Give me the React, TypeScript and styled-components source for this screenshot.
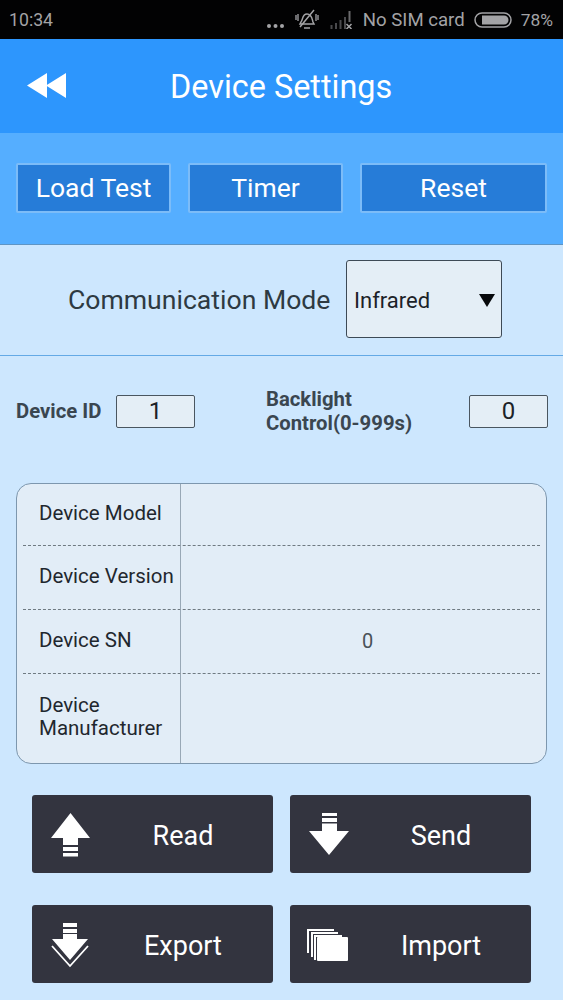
import React from "react";
import styled, { createGlobalStyle } from "styled-components";

const Global = createGlobalStyle`
  html, body { margin: 0; padding: 0; background: #cde7fe; }
  * { box-sizing: border-box; }
  body { font-family: Roboto, "Liberation Sans", sans-serif; }
`;

const Page = styled.div`
  width: 563px;
  height: 1000px;
  overflow: hidden;
  display: flex;
  flex-direction: column;
  background: #cde7fe;
  & > * { flex: none; }
`;

const StatusBar = styled.div`
  height: 39px;
  background: #020203;
  color: #a3a3a6;
  display: flex;
  align-items: center;
  padding: 0 10px 0 9px;
`;
const Clock = styled.span`
  flex: 1;
  font-size: 17.7px;
`;
const StatusIcon = styled.svg<{ $ml?: number; $mt?: number }>`
  display: block;
  flex: none;
  margin-left: ${(p) => p.$ml ?? 0}px;
  margin-top: ${(p) => p.$mt ?? 0}px;
`;
const SimText = styled.span`
  font-size: 18.6px;
  margin: 0 9px 0 10px;
`;
const Percent = styled.span`
  font-size: 17.4px;
  margin-left: 9px;
`;

const Header = styled.header`
  height: 94px;
  background: #2d96fd;
  display: flex;
  align-items: center;
  padding-left: 27px;
`;
const Title = styled.h1`
  margin: 2px 0 0 103px;
  color: #fff;
  font-size: 32.4px;
  font-weight: 400;
`;

const Toolbar = styled.div`
  height: 112px;
  background: #55aeff;
  border-bottom: 1px solid #5f95c4;
  display: flex;
  align-items: flex-start;
  padding: 30px 16px 0;
  gap: 17px;
`;
const TabButton = styled.div<{ $w: number }>`
  width: ${(p) => p.$w}px;
  height: 50px;
  padding-bottom: 1px;
  background: #267cd8;
  border: 2.5px solid #7cbcf8;
  border-radius: 2px;
  color: #fff;
  font-size: 26.5px;
  display: flex;
  align-items: center;
  justify-content: center;
`;

const ModeRow = styled.div`
  height: 111px;
  border-bottom: 1px solid #64aae6;
  display: flex;
  align-items: flex-start;
  padding: 15px 0 0 68px;
`;
const ModeLabel = styled.span`
  font-size: 26.6px;
  color: #2e3a42;
  margin-top: 25px;
  line-height: 30px;
  width: 278px;
`;
const Select = styled.div`
  width: 156px;
  height: 78px;
  background: #e4eef6;
  border: 1px solid #3d4a56;
  border-radius: 3px;
  display: flex;
  align-items: center;
  justify-content: space-between;
  padding: 2px 5px 0 7px;
  font-size: 22px;
  color: #1c2228;
`;

const IdRow = styled.div`
  display: flex;
  align-items: center;
  height: 60px;
  margin-top: 25px;
  padding: 0 15px 0 16px;
`;
const IdLabel = styled.span`
  font-size: 20.3px;
  font-weight: 700;
  color: #3a4650;
  line-height: 24px;
  width: 100px;
`;
const BacklightLabel = styled(IdLabel)`
  width: 203px;
  margin-left: 71px;
`;
const ValueBox = styled.div`
  width: 79px;
  height: 33px;
  background: #e4eef6;
  border: 1px solid #4a5660;
  border-radius: 2px;
  display: flex;
  align-items: center;
  justify-content: center;
  font-size: 24px;
  color: #1c2228;
`;

const InfoTable = styled.div`
  margin: 42px 16px 0;
  height: 281px;
  border: 1.5px solid #7d97ae;
  border-radius: 15px;
  background: #e2edf7;
  display: grid;
  grid-template-rows: 62px 64px 64px 1fr;
  padding: 0 6px;
  overflow: hidden;
`;
const InfoRow = styled.div<{ $last?: boolean }>`
  display: grid;
  grid-template-columns: 158px 1fr;
  border-bottom: ${(p) => (p.$last ? "none" : "1px dashed #6f7a82")};
`;
const InfoLabel = styled.div`
  display: flex;
  align-items: center;
  padding: 0 0 3px 16px;
  font-size: 20.5px;
  line-height: 23px;
  color: #1f272e;
  border-right: 1px solid #98a8b6;
`;
const InfoValue = styled.div`
  display: flex;
  align-items: center;
  justify-content: center;
  padding: 0 0 2px 14px;
  font-size: 20px;
  color: #4a5258;
`;

const ActionGrid = styled.div`
  display: grid;
  grid-template-columns: 241px 241px;
  grid-auto-rows: 78px;
  column-gap: 17px;
  row-gap: 32px;
  margin: 31px 0 0 32px;
`;
const ActionButton = styled.div`
  background: #33343f;
  border-radius: 3px;
  display: flex;
  align-items: center;
  color: #fff;
  font-size: 27px;
  position: relative;
`;
const ActionIcon = styled.svg`
  position: absolute;
  left: 16px;
  top: 14px;
  width: 44px;
  height: 50px;
`;
const ActionText = styled.span`
  width: 100%;
  padding: 3px 0 0 61px;
  text-align: center;
`;

const Back = () => (
  <svg width="40" height="28" viewBox="0 0 40 28">
    <path d="M0 13.5 20 1v25zM19 13.5 39 1v25z" fill="#fff" />
  </svg>
);

const Arrow = () => (
  <svg width="18" height="16" viewBox="0 0 18 16">
    <path d="M1 2 H17 L9 15z" fill="#07090c" />
  </svg>
);

export default function App() {
  return (
    <Page>
      <Global />
      <StatusBar>
        <Clock>10:34</Clock>
        <StatusIcon width="20" height="8" viewBox="0 0 20 8" $mt={12}>
          <circle cx="3" cy="4" r="2" fill="#a3a3a6" />
          <circle cx="9.5" cy="4" r="2" fill="#a3a3a6" />
          <circle cx="16" cy="4" r="2" fill="#a3a3a6" />
        </StatusIcon>
        <StatusIcon width="24" height="22" viewBox="0 0 24 22" $ml={9}>
          <path d="M6 13c2-2 1-8 6-8s5 5 6 8l1 2H5z" fill="none" stroke="#a3a3a6" strokeWidth="1.5" />
          <path d="M9 19h6M5 18 19 1" stroke="#a3a3a6" strokeWidth="1.5" />
          <path d="M1 6v5M3 5v7M21 5v7M23 6v5" stroke="#a3a3a6" strokeWidth="1.3" />
        </StatusIcon>
        <StatusIcon width="23" height="18" viewBox="0 0 23 18" $ml={11}>
          <path d="M1.500 14v4M6 12v6M10.500 9v9M15 6v12" stroke="#4a4a4d" strokeWidth="2" />
          <path d="M19.500 0v11" stroke="#6a6a6d" strokeWidth="2" />
          <path d="M16.500 13l5 5M21.500 13l-5 5" stroke="#a3a3a6" strokeWidth="1.5" />
        </StatusIcon>
        <SimText>No SIM card</SimText>
        <StatusIcon width="38" height="16" viewBox="0 0 38 16">
          <rect x="1" y="1" width="36" height="14" rx="7" fill="none" stroke="#a3a3a6" strokeWidth="1.5" />
          <path d="M8 3.500h22a4.500 4.500 0 0 1 0 9H8z" fill="#a3a3a6" />
        </StatusIcon>
        <Percent>78%</Percent>
      </StatusBar>
      <Header>
        <Back />
        <Title>Device Settings</Title>
      </Header>
      <Toolbar>
        <TabButton $w={155}>Load Test</TabButton>
        <TabButton $w={155}>Timer</TabButton>
        <TabButton $w={187}>Reset</TabButton>
      </Toolbar>
      <ModeRow>
        <ModeLabel>Communication Mode</ModeLabel>
        <Select>
          Infrared
          <Arrow />
        </Select>
      </ModeRow>
      <IdRow>
        <IdLabel>Device ID</IdLabel>
        <ValueBox>1</ValueBox>
        <BacklightLabel>
          Backlight
          <br />
          Control(0-999s)
        </BacklightLabel>
        <ValueBox>0</ValueBox>
      </IdRow>
      <InfoTable>
        <InfoRow>
          <InfoLabel>Device Model</InfoLabel>
          <InfoValue />
        </InfoRow>
        <InfoRow>
          <InfoLabel>Device Version</InfoLabel>
          <InfoValue />
        </InfoRow>
        <InfoRow>
          <InfoLabel>Device SN</InfoLabel>
          <InfoValue>0</InfoValue>
        </InfoRow>
        <InfoRow $last>
          <InfoLabel>
            Device
            <br />
            Manufacturer
          </InfoLabel>
          <InfoValue />
        </InfoRow>
      </InfoTable>
      <ActionGrid>
        <ActionButton>
          <ActionIcon viewBox="0 0 44 50">
            <path d="M22.500 4 42 29H30V36H15V29H3z" fill="#fff" />
            <path d="M15 38h15v4H15zM15 44h15v3.500H15z" fill="#fff" />
          </ActionIcon>
          <ActionText>Read</ActionText>
        </ActionButton>
        <ActionButton>
          <ActionIcon viewBox="0 0 44 50">
            <path d="M16 4h15v3H16zM16 9h15v4H16z" fill="#fff" />
            <path d="M23 46 3 22H16V14.500H31V22H43z" fill="#fff" />
          </ActionIcon>
          <ActionText>Send</ActionText>
        </ActionButton>
        <ActionButton>
          <ActionIcon viewBox="0 0 44 50">
            <path d="M15 4h14v4H15zM15 10h14v4H15z" fill="#fff" />
            <path d="M22 41 4 20H15V15H29V20H40z" fill="#fff" />
            <path d="M4 27 22 47 40 27" fill="none" stroke="#fff" strokeWidth="1.800" />
          </ActionIcon>
          <ActionText>Export</ActionText>
        </ActionButton>
        <ActionButton>
          <ActionIcon viewBox="0 0 44 50">
            <path d="M28 11H2V34M32 14H6V38M36 17H9V41" fill="none" stroke="#fff" strokeWidth="2" />
            <rect x="11" y="18" width="31" height="24" rx="1" fill="#fff" />
          </ActionIcon>
          <ActionText>Import</ActionText>
        </ActionButton>
      </ActionGrid>
    </Page>
  );
}
